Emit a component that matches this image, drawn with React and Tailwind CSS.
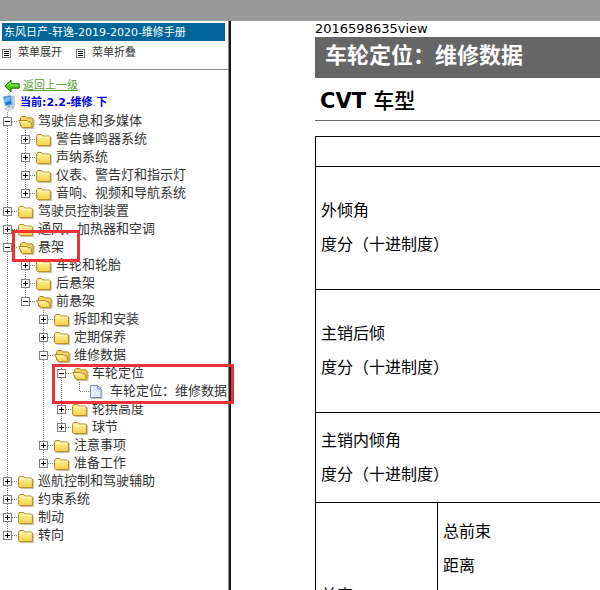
import React, { useState } from "react";

const tree = [
  {
    label: "驾驶信息和多媒体",
    children: [
      { label: "警告蜂鸣器系统", children: [] },
      { label: "声纳系统", children: [] },
      { label: "仪表、警告灯和指示灯", children: [] },
      { label: "音响、视频和导航系统", children: [] },
    ],
  },
  { label: "驾驶员控制装置", children: [] },
  { label: "通风、加热器和空调", children: [] },
  {
    label: "悬架",
    marked: true,
    children: [
      { label: "车轮和轮胎", children: [] },
      { label: "后悬架", children: [] },
      {
        label: "前悬架",
        children: [
          { label: "拆卸和安装", children: [] },
          { label: "定期保养", children: [] },
          {
            label: "维修数据",
            children: [
              {
                label: "车轮定位",
                markedGroup: true,
                children: [{ label: "车轮定位：维修数据" }],
              },
              { label: "轮拱高度", children: [] },
              { label: "球节", children: [] },
            ],
          },
          { label: "注意事项", children: [] },
          { label: "准备工作", children: [] },
        ],
      },
    ],
  },
  { label: "巡航控制和驾驶辅助", children: [] },
  { label: "约束系统", children: [] },
  { label: "制动", children: [] },
  { label: "转向", children: [] },
];

const MenuIcon = () => (
  <svg width="9" height="9" viewBox="0 0 9 9" shapeRendering="crispEdges" className="shrink-0">
    <path d="M.5 .5h8v8h-8z" fill="#fff" stroke="#777" />
    <path d="M2 2.5h5M2 4.5h5M2 6.5h5" stroke="#000" />
  </svg>
);

const BackIcon = () => (
  <svg width="16" height="14" viewBox="0 0 16 14" className="shrink-0">
    <path d="M.8 7 7 1.2V4.8h8.2v4.4H7v3.6z" fill="#4ccb1c" stroke="#126c08" strokeLinejoin="round" />
    <path d="M3 6.6 6.2 3.6V6H14" fill="none" stroke="#a5ee72" />
  </svg>
);

const ComputerIcon = () => (
  <svg width="16" height="18" viewBox="0 0 16 18" className="shrink-0">
    <path d="M8.5 2.6 11.4 2l1 1v9.6l-2.6 1.6z" fill="#c3d2dc" stroke="#8ba3b4" strokeWidth=".6" />
    <path d="m1.4 2.8 7.4-1.4 1.4 9.2-6.8 1.2z" fill="#1c78d8" stroke="#90b4d4" />
    <path d="m2.6 3.8 5.4-1 .6 3.8-5.4 2z" fill="#6cc0fa" />
    <path d="m5.2 11.6 3-.5.5 2.5-3 .5z" fill="#9eb1c2" />
    <path d="m2.5 14.4 6-1.6 3.4 1.4-6 2.4z" fill="#dbe5ec" stroke="#90a4b4" strokeWidth=".6" />
  </svg>
);

const FolderIcon = ({ open }) => (
  <svg width="18" height="18" viewBox="0 0 18 18" className="shrink-0">
    <defs>
      <linearGradient id="folder" x1="0" y1="0" x2="0" y2="1">
        <stop offset="0" stopColor="#fff6a4" />
        <stop offset="1" stopColor="#f4cf49" />
      </linearGradient>
    </defs>
    {open ? (
      <>
        <path d="M2.6 14V5.8L3.8 4.5h3.6l1.4 1.4h5.3l1 1v8z" fill="#f3d566" stroke="#b08722" />
        <path d="M.7 8.5h8.4l1.2 1.2h2.5l1.6 5.9H4.2z" fill="url(#folder)" stroke="#b08722" strokeLinejoin="round" />
        <path d="M4.5 16.5h11.6V7.6" fill="none" stroke="#86795a" strokeOpacity=".45" />
      </>
    ) : (
      <>
        <path d="M.6 14.6V6.2l1.2-1.7h3.7L6.8 6h6.6l1 1v8.6H1.6z" fill="url(#folder)" stroke="#b08722" strokeLinejoin="round" />
        <path d="M2 7.2h11.4" stroke="#fffac9" />
        <path d="M2.5 16.6h12.9V7.6" fill="none" stroke="#86795a" strokeOpacity=".45" />
      </>
    )}
  </svg>
);

const PageIcon = () => (
  <svg width="18" height="18" viewBox="0 0 18 18" className="shrink-0">
    <path d="M.5 3.5h7l3.5 3.3v8.7H.5z" fill="#dfedff" stroke="#6d89bd" />
    <path d="M7.5 3.5v3.3H11z" fill="#fff" stroke="#6d89bd" />
    <path d="M2 5v9" stroke="#fff" />
    <path d="M1.5 16.5H12V8" fill="none" stroke="#777" strokeOpacity=".45" />
  </svg>
);

// one 18px cell of the dotted guide lines, optionally with a plus / minus box
const Join = ({ up, down, right, sign }) => (
  <svg width="18" height="18" viewBox="0 0 18 18" shapeRendering="crispEdges" className="shrink-0">
    <g stroke="#808080" strokeDasharray="1 1">
      {up && <path d="M7.5 0v9" />}
      {down && <path d="M7.5 10v8" />}
      {right && <path d="M8 9.5h10" />}
    </g>
    {sign && (
      <>
        <path d="M3.5 5.5h8v8h-8z" fill="#fff" stroke="#808080" />
        <path d={sign === "plus" ? "M5 9.5h5M7.5 7v5" : "M5 9.5h5"} stroke="#000" />
      </>
    )}
  </svg>
);

const TreeNode = ({ node, guides, last }) => {
  const [open, setOpen] = useState(node.children?.length > 0);
  const isFolder = Boolean(node.children);

  return (
    <li className="relative">
      <div className="flex h-[18px] items-center whitespace-nowrap">
        {guides.map((line, i) => (
          <Join key={i} up={line} down={line} />
        ))}
        {isFolder ? (
          <button type="button" aria-label={node.label} onClick={() => setOpen(!open)}>
            <Join up down={!last} right sign={open ? "minus" : "plus"} />
          </button>
        ) : (
          <Join up down={!last} right />
        )}
        {isFolder ? <FolderIcon open={open} /> : <PageIcon />}
        <a href="#" className="pl-[2px] text-[13px] leading-[18px] text-[#333]">
          {node.label}
        </a>
      </div>
      {open && node.children.length > 0 && (
        <ul>
          {node.children.map((child, i) => (
            <TreeNode
              key={child.label}
              node={child}
              guides={[...guides, !last]}
              last={i === node.children.length - 1}
            />
          ))}
        </ul>
      )}
      {node.marked && (
        <div className="pointer-events-none absolute -top-2 left-3 z-10 h-8 w-[68px] border-3 border-[#ee3338]" />
      )}
      {node.markedGroup && (
        <div className="pointer-events-none absolute top-0 -right-1.5 -bottom-1 left-[52px] z-10 border-3 border-[#ee3338]" />
      )}
    </li>
  );
};

const Sidebar = () => (
  <nav className="w-[229px] shrink-0 border-r border-[#888]">
    <div className="border-b border-[#888] pt-0.5 pb-[7px]">
      <h2 className="mr-[3px] ml-0.5 bg-[#006699] pt-px pl-0.5 text-[11px] leading-[17px] text-white">
        东风日产-轩逸-2019-2020-维修手册
      </h2>
      <div className="flex gap-[14px] pt-[3px] pl-0.5 text-[11px] leading-[18px] text-[#333]">
        <button type="button" className="flex items-center gap-[7px]">
          <MenuIcon />
          菜单展开
        </button>
        <button type="button" className="flex items-center gap-[7px]">
          <MenuIcon />
          菜单折叠
        </button>
      </div>
    </div>
    <div className="pt-2 text-[11px]">
      <a href="#" className="flex h-4 items-center gap-[3px] pl-1 text-[#5aa033] underline">
        <BackIcon />
        返回上一级
      </a>
      <div className="flex h-[18px] items-center gap-0.5 pl-0.5 font-bold text-[#0000dd]">
        <ComputerIcon />
        当前:2.2-维修 下
      </div>
    </div>
    <ul>
      {tree.map((node, i) => (
        <TreeNode key={node.label} node={node} guides={[]} last={i === tree.length - 1} />
      ))}
    </ul>
  </nav>
);

const specs = [
  { name: "外倾角", height: "h-[123px]" },
  { name: "主销后倾", height: "h-[123px]" },
  { name: "主销内倾角", height: "h-[90px]" },
];

const Content = () => (
  <main className="min-w-0 flex-1 overflow-hidden border-l-2 border-[#1a1a1a] pl-[84px] text-black">
    <p className="text-[13px] leading-4">2016598635view</p>
    <h1 className="bg-[#666] pt-1 pb-[7px] pl-2.5 text-[22px] leading-[30px] font-bold whitespace-nowrap text-white">
      车轮定位：维修数据
    </h1>
    <h2 className="border-b border-[#666] pt-2 pb-1 pl-[5px] text-[21px] leading-[30px] font-bold">
      CVT <span className="font-medium">车型</span>
    </h2>
    <table className="mt-[15px] w-[420px] table-fixed border-collapse text-base leading-[18px]">
      <colgroup>
        <col className="w-[122px]" />
        <col />
      </colgroup>
      <tbody>
        <tr className="h-[30px]">
          <td colSpan={2} className="border border-black" />
        </tr>
        {specs.map((s) => (
          <tr key={s.name} className={s.height}>
            <td colSpan={2} className="border border-black px-[5px]">
              <p>{s.name}</p>
              <p className="mt-4">度分（十进制度）</p>
            </td>
          </tr>
        ))}
        <tr className="h-[186px] align-top">
          <td className="border border-black px-[5px] align-middle">前束</td>
          <td className="border border-black px-[5px] pt-5">
            <p>总前束</p>
            <p className="mt-4">距离</p>
          </td>
        </tr>
      </tbody>
    </table>
  </main>
);

export default function App() {
  return (
    <div
      className="flex h-screen flex-col overflow-hidden bg-white"
      style={{ fontFamily: '"DejaVu Sans", "Noto Sans CJK SC", sans-serif' }}
    >
      <header className="h-[21px] shrink-0 bg-[#999]" />
      <div className="flex min-h-0 flex-1">
        <Sidebar />
        <Content />
      </div>
    </div>
  );
}
